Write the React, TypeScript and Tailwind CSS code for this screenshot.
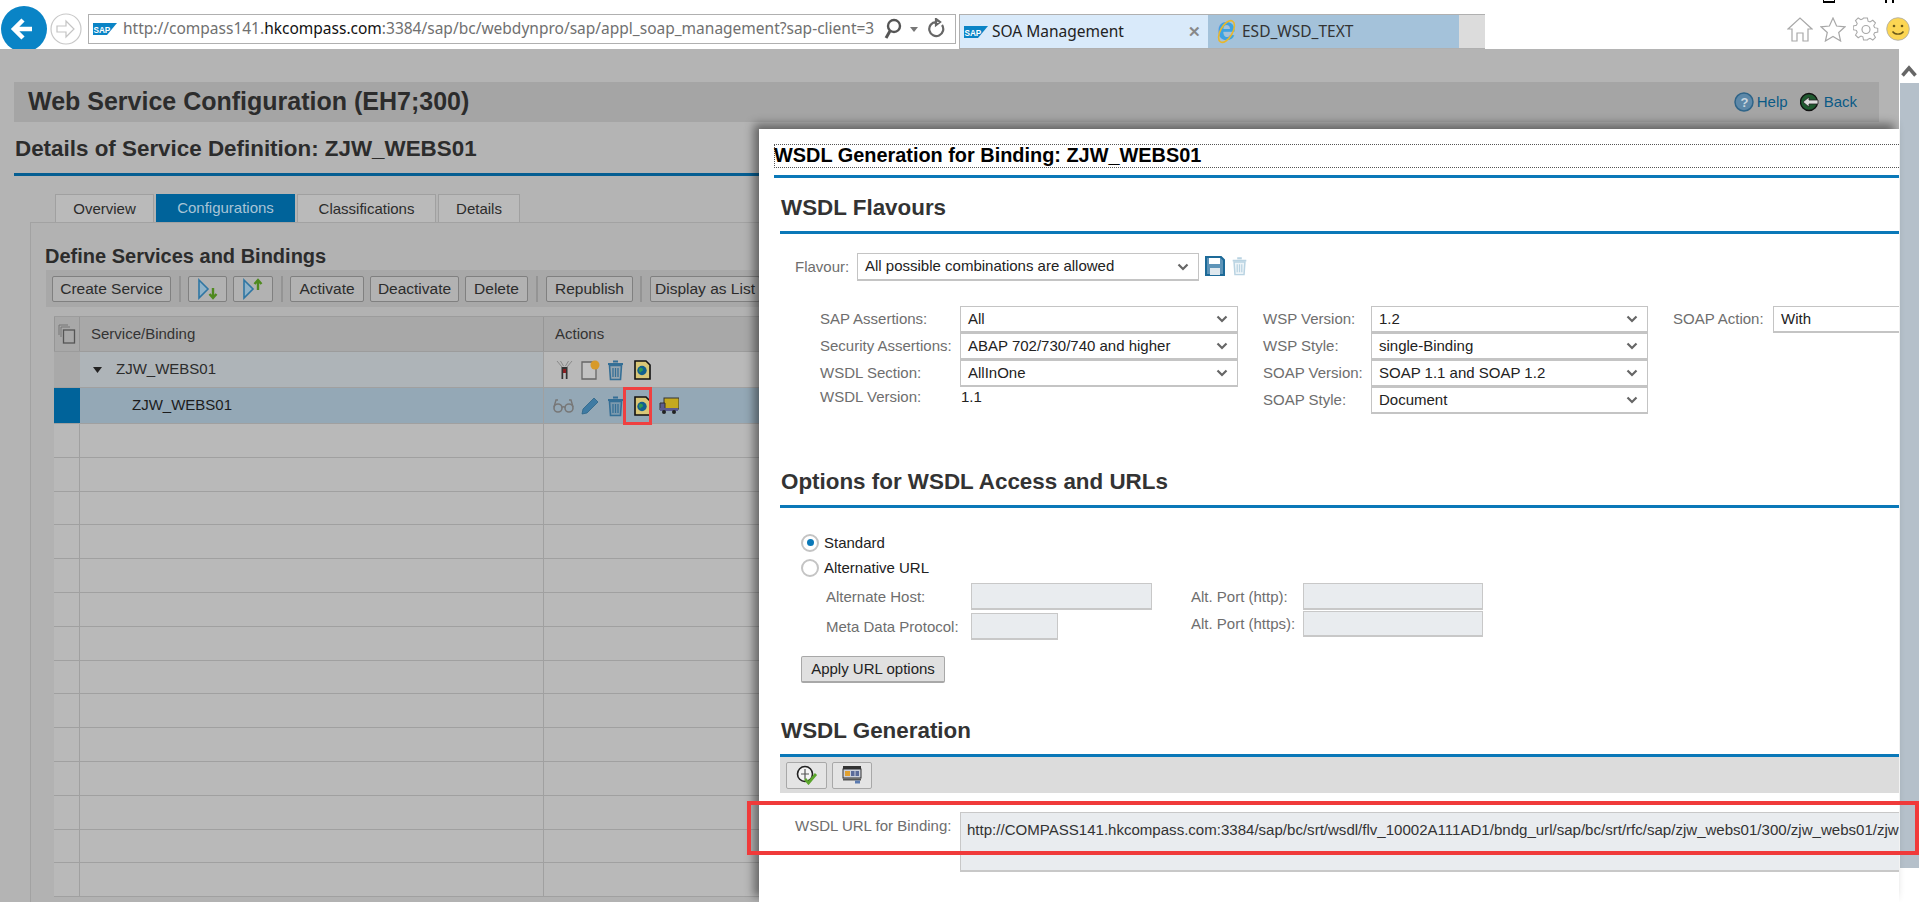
import React from 'react';

const emptyRows = Array.from({ length: 14 }, (_, i) => i);

const SapLogo = () => (
  <svg width="24" height="12" viewBox="0 0 24 12" className="shrink-0">
    <polygon points="0,0 24,0 14,12 0,12" fill="#0a84c6" />
    <text x="0.500" y="9.500" fontSize="8.200" fontWeight="700" fill="#fff" fontFamily="Liberation Sans, sans-serif">SAP</text>
  </svg>
);

const Chevron = () => (
  <svg width="12" height="8" viewBox="0 0 12 8" className="shrink-0">
    <path d="M1.500 1.500 6 6l4.500-4.500" fill="none" stroke="#666" strokeWidth="2.200" />
  </svg>
);

const TrashIcon = ({ color = '#356f96', w = 17, h = 22 }: { color?: string; w?: number; h?: number }) => (
  <svg width={w} height={h} viewBox="0 0 17 22" className="shrink-0">
    <path d="M6 2.500h5M1 5h15" stroke={color} strokeWidth="2" fill="none" />
    <path d="M2.500 6.500 3.500 20.500h10l1-14z" fill={color} fillOpacity="0.25" stroke={color} strokeWidth="1.600" />
    <path d="M6 9v9M8.500 9v9M11 9v9" stroke={color} strokeWidth="1.300" />
  </svg>
);

const GlobeDoc = () => (
  <svg width="17" height="20" viewBox="0 0 17 20" className="shrink-0">
    <path d="M1 1h11l4 4v14H1z" fill="#d9c777" stroke="#111" strokeWidth="1.600" />
    <circle cx="8" cy="10.500" r="4.700" fill="#12608f" />
    <path d="M5.500 8c1.800-.8 3.500 0 3.500 1.800s-2.500 1.200-2.500 3c-1.700-.8-1.900-3.400-1-4.800z" fill="#2f9a52" />
  </svg>
);

const TowerIcon = () => (
  <svg width="17" height="19" viewBox="0 0 17 19" className="shrink-0">
    <path d="M1 1l5 6M16 1l-5 6M4.500 1l3 5M12.500 1l-3 5" stroke="#8a8a8a" strokeWidth="1" fill="none" />
    <rect x="5.500" y="7" width="6" height="12" fill="#333" />
    <rect x="7" y="9" width="3" height="4" fill="#8a1f22" />
    <rect x="7.200" y="13" width="2.600" height="6" fill="#bbb" />
  </svg>
);

const NewDocIcon = () => (
  <svg width="19" height="20" viewBox="0 0 19 20" className="shrink-0">
    <path d="M1 2h14v17H1z" fill="#c2c2c2" stroke="#666" strokeWidth="1.300" />
    <circle cx="14" cy="5" r="4.500" fill="#d79a2a" />
  </svg>
);

const GlassesIcon = () => (
  <svg width="21" height="16" viewBox="0 0 21 16" className="shrink-0">
    <circle cx="5" cy="10" r="4" fill="none" stroke="#777" strokeWidth="1.600" />
    <circle cx="16" cy="10" r="4" fill="none" stroke="#777" strokeWidth="1.600" />
    <path d="M9 9.500c1-1 2-1 3 0M1 9 3 2h2M20 9 18 2h-2" fill="none" stroke="#777" strokeWidth="1.400" />
  </svg>
);

const PencilIcon = () => (
  <svg width="18" height="18" viewBox="0 0 18 18" className="shrink-0">
    <path d="M13 1l4 4L6 16l-5 1 1-5z" fill="#3f7ba3" stroke="#2d6588" strokeWidth="0.800" />
  </svg>
);

const TruckIcon = () => (
  <svg width="20" height="17" viewBox="0 0 20 17" className="shrink-0">
    <rect x="5" y="1" width="15" height="11" fill="#c4a91f" stroke="#333" strokeWidth="1" />
    <path d="M1 6h5v7H1z" fill="#5b5c8f" stroke="#333" strokeWidth="1" />
    <rect x="1" y="11" width="18" height="3" fill="#5b5c8f" />
    <circle cx="5" cy="15" r="2" fill="#222" />
    <circle cx="15" cy="15" r="2" fill="#222" />
  </svg>
);

const Arrow = ({ up }: { up?: boolean }) => (
  <svg width="22" height="22" viewBox="0 0 22 22" className="shrink-0">
    <path d="M2 2l9 9-9 9z" fill="#8fb2c8" stroke="#2f76a3" strokeWidth="1.600" />
    {up ? (
      <path d="M16 12V4M12.500 6 16 2l3.500 4" fill="none" stroke="#4f8a1f" strokeWidth="2.400" />
    ) : (
      <path d="M16 10v8M12.500 16l3.500 4 3.500-4" fill="none" stroke="#4f8a1f" strokeWidth="2.400" />
    )}
  </svg>
);

const ToolButton = ({ children, w }: { children: React.ReactNode; w: string }) => (
  <div className={`${w} h-[26px] flex items-center justify-center shrink-0 border border-[#808080] rounded-[2px] bg-[#b2b2b2] text-[15.5px] text-[#2c2c2c]`}>
    {children}
  </div>
);

const Sep = ({ cls }: { cls: string }) => <div className={`${cls} w-[2px] h-[26px] bg-[#949494] shrink-0`} />;

const Select = ({ value, w }: { value: string; w: string }) => (
  <div className={`${w} h-[27px] flex items-center justify-between shrink-0 border border-[#c4c4c4] border-b-2 bg-white pl-[7px] pr-[9px] text-[15px] text-[#222]`}>
    <span className="whitespace-nowrap">{value}</span>
    <Chevron />
  </div>
);

const FormRow = ({ label, lw, children }: { label: string; lw: string; children: React.ReactNode }) => (
  <div className="flex items-center h-[27px]">
    <span className={`${lw} shrink-0 text-[15px] text-[#6e6e6e] whitespace-nowrap`}>{label}</span>
    {children}
  </div>
);

const Heading = ({ children, mt }: { children: React.ReactNode; mt: string }) => (
  <div className={`${mt} ml-[21px] border-b-[3px] border-[#0a78b8] pl-px pt-px pb-[10px] h-[40px] leading-[26px] text-[22.4px] font-bold text-[#333]`}>
    {children}
  </div>
);

const ReadOnlyBox = ({ w, h = 'h-[27px]' }: { w: string; h?: string }) => (
  <div className={`${w} ${h} shrink-0 bg-[#e9ecef] border border-[#c8c8c8] border-b-2`} />
);

const BrowserBar = () => (
  <header className="h-[49px] flex shrink-0 overflow-hidden bg-white font-['Noto_Sans',sans-serif]">
    <svg width="46" height="46" viewBox="0 0 46 46" className="ml-px mt-[6px] shrink-0">
      <circle cx="23" cy="23" r="23" fill="#0a84c6" />
      <path d="M31 23H14M22 14l-9 9 9 9" fill="none" stroke="#fff" strokeWidth="4.500" />
    </svg>
    <svg width="32" height="32" viewBox="0 0 32 32" className="ml-[3px] mt-[13px] shrink-0">
      <circle cx="16" cy="16" r="15" fill="none" stroke="#c8c8c8" strokeWidth="1.200" />
      <path d="M7 13h9V8l8 8-8 8v-5H7z" fill="none" stroke="#c4c4c4" strokeWidth="1.200" />
    </svg>
    <div className="w-[868px] h-[30px] mt-[14px] ml-[6px] flex items-center shrink-0 border border-[#b0b0b0] pl-[4px]">
      <SapLogo />
      <div className="w-[754px] ml-[6px] overflow-hidden whitespace-nowrap text-[15.5px] text-[#707070]">
        http://compass141.<span className="text-[#111]">hkcompass.com</span>:3384/sap/bc/webdynpro/sap/appl_soap_management?sap-client=3
      </div>
      <svg width="20" height="22" viewBox="0 0 20 22" className="ml-[6px] shrink-0">
        <circle cx="11" cy="8" r="6" fill="none" stroke="#555" strokeWidth="2.400" />
        <path d="M7 13l-4 7" stroke="#555" strokeWidth="3" />
      </svg>
      <svg width="8" height="5" viewBox="0 0 8 5" className="ml-[7px] shrink-0">
        <path d="M0 0h8L4 5z" fill="#777" />
      </svg>
      <svg width="20" height="22" viewBox="0 0 20 22" className="ml-[9px] shrink-0">
        <path d="M15 7a7 7 0 1 1-6-3M9 1v6l4-3z" fill="none" stroke="#666" strokeWidth="2.200" />
      </svg>
    </div>
    <div className="ml-[3px] mt-[14px] h-[35px] flex border-y border-l border-[#b0b0b0] shrink-0 text-[15.5px]">
      <div className="w-[248px] flex items-center bg-[#d9eafa] pl-[4px] pr-[7px] text-[#222]">
        <SapLogo />
        <span className="ml-[4px] flex-1 whitespace-nowrap">SOA Management</span>
        <span className="text-[#888] text-[15px] font-bold">✕</span>
      </div>
      <div className="w-[251px] flex items-center bg-[#a4c2da] pl-[8px] text-[#333]">
        <svg width="21" height="25" viewBox="0 0 21 25" className="shrink-0">
          <text x="1" y="21" fontSize="33" fontWeight="700" fill="#3da2e2" fontFamily="Liberation Sans, sans-serif">e</text>
          <ellipse cx="10.500" cy="12.500" rx="6" ry="12" transform="rotate(30 10.500 12.500)" fill="none" stroke="#e8b72c" strokeWidth="1.600" />
        </svg>
        <span className="ml-[5px] whitespace-nowrap">ESD_WSD_TEXT</span>
      </div>
      <div className="w-[26px] bg-[#dcdcdc]" />
    </div>
    <div className="ml-[302px] mt-[17px] flex items-start gap-[7px] shrink-0">
      <svg width="26" height="25" viewBox="0 0 26 25">
        <path d="M1 12 13 1l12 11h-4v12h-5v-8h-6v8H5V12z" fill="none" stroke="#a8a8a8" strokeWidth="1.200" />
      </svg>
      <svg width="26" height="25" viewBox="0 0 26 25">
        <path d="m13 1 3.600 8 8.400.8-6.300 5.700 1.900 8.500L13 19.500 5.400 24l1.900-8.500L1 9.800 9.400 9z" fill="none" stroke="#a8a8a8" strokeWidth="1.200" />
      </svg>
      <svg width="26" height="25" viewBox="0 0 26 25">
        <circle cx="13" cy="12.500" r="4" fill="none" stroke="#a8a8a8" strokeWidth="1.200" />
        <path d="M11 1h4l.7 3.300 2 .9 2.900-1.800 2.800 2.800-1.800 2.900.9 2 3.300.7v3.800l-3.300.7-.9 2 1.800 2.900-2.800 2.800-2.900-1.800-2 .9L15 24h-4l-.7-3.300-2-.9-2.900 1.800-2.800-2.800 1.800-2.900-.9-2-3.300-.7V9.400l3.300-.7.9-2-1.800-2.900 2.800-2.800 2.900 1.800 2-.9z" fill="none" stroke="#a8a8a8" strokeWidth="1.100" transform="scale(.96)" />
      </svg>
      <svg width="24" height="24" viewBox="0 0 24 24">
        <circle cx="12" cy="12" r="11.300" fill="#fcd653" stroke="#a8a8a8" strokeWidth="0.800" />
        <circle cx="8" cy="9" r="1.300" fill="#6b5a1a" />
        <circle cx="16" cy="9" r="1.300" fill="#6b5a1a" />
        <path d="M6.500 14.500c2.500 3.500 8.500 3.500 11 0" fill="none" stroke="#6b5a1a" strokeWidth="1.400" />
      </svg>
    </div>
  </header>
);

const PageBehind = () => (
  <main className="w-[1899px] shrink-0 bg-[#b4b4b4] pl-[14px] pt-[33px] flex flex-col text-[#2c2c2c] overflow-hidden">
    <div className="w-[1865px] h-[40px] shrink-0 bg-[#a5a5a5] flex items-center justify-between pl-[14px] pr-[22px]">
      <h1 className="text-[25px] font-bold">Web Service Configuration (EH7;300)</h1>
      <div className="flex items-center text-[15px] text-[#0b5a86]">
        <svg width="20" height="20" viewBox="0 0 20 20">
          <circle cx="10" cy="10" r="9" fill="#5d88a8" stroke="#2f6488" strokeWidth="1.500" />
          <text x="6.500" y="15" fontSize="13" fontWeight="700" fill="#c9d6df" fontFamily="Liberation Sans, sans-serif">?</text>
        </svg>
        <span className="ml-[3px]">Help</span>
        <svg width="20" height="20" viewBox="0 0 20 20" className="ml-[12px]">
          <circle cx="9" cy="10" r="8.500" fill="#1f5a30" stroke="#111" strokeWidth="1.300" />
          <path d="M3 10l6-5v3h9v4H9v3z" fill="#ddd" stroke="#222" strokeWidth="0.800" />
        </svg>
        <span className="ml-[4px]">Back</span>
      </div>
    </div>
    <div className="h-[54px] shrink-0 flex items-center text-[22.4px] font-bold border-b-[3px] border-[#055e92] pl-px pt-[3px]">
      Details of Service Definition: ZJW_WEBS01
    </div>
    <div className="mt-[18px] ml-[41px] h-[28px] flex shrink-0 gap-[2px] text-[15px] pt-0">
      <div className="w-[99px] flex items-center justify-center pt-px bg-[#bababa] border border-b-0 border-[#a0a0a0]">Overview</div>
      <div className="w-[139px] flex items-center justify-center pt-px bg-[#00639a] text-[#a8c4d6]">Configurations</div>
      <div className="w-[139px] flex items-center justify-center pt-px bg-[#bababa] border border-b-0 border-[#a0a0a0]">Classifications</div>
      <div className="w-[82px] flex items-center justify-center pt-px bg-[#bababa] border border-b-0 border-[#a0a0a0]">Details</div>
    </div>
    <div className="ml-[16px] flex-1 min-h-0 border-l border-t border-[#a2a2a2] bg-[#b2b2b2] pl-[15px]">
      <h2 className="-ml-px h-[47px] pt-[21px] leading-[24px] text-[20px] font-bold whitespace-nowrap">Define Services and Bindings</h2>
      <div className="h-[37px] flex items-center bg-[#a8a8a8] pl-[6px]">
        <ToolButton w="w-[119px]">Create Service</ToolButton>
        <Sep cls="ml-[8px]" />
        <div className="ml-[7px]"><ToolButton w="w-[39px]"><Arrow /></ToolButton></div>
        <div className="ml-[6px]"><ToolButton w="w-[40px]"><Arrow up /></ToolButton></div>
        <Sep cls="ml-[8px]" />
        <div className="ml-[7px]"><ToolButton w="w-[74px]">Activate</ToolButton></div>
        <div className="ml-[6px]"><ToolButton w="w-[89px]">Deactivate</ToolButton></div>
        <div className="ml-[6px]"><ToolButton w="w-[63px]">Delete</ToolButton></div>
        <Sep cls="ml-[8px]" />
        <div className="ml-[8px]"><ToolButton w="w-[87px]">Republish</ToolButton></div>
        <Sep cls="ml-[7px]" />
        <div className="ml-[8px]"><ToolButton w="w-[110px]">Display as List</ToolButton></div>
      </div>
      <div className="mt-[9px] ml-[8px] text-[15px]">
        <div className="h-[36px] flex bg-[#a8a8a8] border-y border-[#9c9c9c] text-[#333]">
          <div className="w-[26px] flex items-center justify-center border-x border-[#969696]">
            <svg width="18" height="20" viewBox="0 0 18 20">
              <path d="M1 1h9M1 1v10M3 3h9M3 3v10" fill="none" stroke="#777" strokeWidth="1" />
              <rect x="5.500" y="6" width="11" height="13" fill="none" stroke="#555" strokeWidth="1.300" />
            </svg>
          </div>
          <div className="w-[464px] flex items-center pl-[11px] border-r border-[#969696]">Service/Binding</div>
          <div className="flex-1 flex items-center pl-[11px]">Actions</div>
        </div>
        <div className="h-[36px] flex border-b border-[#a0a0a0]">
          <div className="w-[26px] bg-[#a9a9a9]" />
          <div className="w-[464px] flex items-center bg-[#aeb4b8] pl-[13px] border-r border-[#a0a0a0]">
            <svg width="9" height="6" viewBox="0 0 9 6" className="mr-[14px]"><path d="M0 0h9L4.500 6z" fill="#222" /></svg>
            ZJW_WEBS01
          </div>
          <div className="flex-1 flex items-center bg-[#b9b9b9] pl-[12px]">
            <TowerIcon />
            <span className="ml-[8px]"><NewDocIcon /></span>
            <span className="ml-[7px]"><TrashIcon /></span>
            <span className="ml-[10px]"><GlobeDoc /></span>
          </div>
        </div>
        <div className="h-[36px] flex border-b border-[#a0a0a0]">
          <div className="w-[26px] bg-[#00639a]" />
          <div className="w-[464px] flex items-center bg-[#94a8b6] pl-[52px] border-r border-[#a0a0a0] text-[#1c1c1c]">ZJW_WEBS01</div>
          <div className="flex-1 flex items-center bg-[#94a8b6] pl-[9px]">
            <GlassesIcon />
            <span className="ml-[7px]"><PencilIcon /></span>
            <span className="ml-[8px]"><TrashIcon /></span>
            <span className="ml-[10px]"><GlobeDoc /></span>
            <span className="ml-[8px]"><TruckIcon /></span>
          </div>
        </div>
        {emptyRows.map(i => (
          <div key={i} className="h-[33.8px] flex border-b border-[#a0a0a0] bg-[#b9b9b9]">
            <div className="w-[26px] border-r border-[#a0a0a0]" />
            <div className="w-[464px] border-r border-[#a0a0a0]" />
          </div>
        ))}
      </div>
    </div>
  </main>
);

const Radio = ({ on }: { on?: boolean }) => (
  <span className="w-[18px] h-[18px] rounded-full border-2 border-[#c4c4c4] bg-white flex items-center justify-center shrink-0">
    {on && <span className="w-[7px] h-[7px] rounded-full bg-[#0a78b8]" />}
  </span>
);

const Dialog = () => (
  <section className="absolute left-[759px] top-[129px] bottom-0 w-[1140px] bg-white overflow-hidden shadow-[-5px_-5px_9px_rgba(0,0,0,0.45)]">
    <div className="mt-[15px] ml-[15px] h-[24px] flex items-center border border-r-0 border-dotted border-[#555] text-[19.9px] font-bold text-black whitespace-nowrap">
      <span className="-ml-px">WSDL Generation for Binding: ZJW_WEBS01</span>
    </div>
    <div className="mt-[7px] ml-[15px] h-[3px] bg-[#0a78b8]" />

    <Heading mt="mt-[16px]">WSDL Flavours</Heading>
    <div className="mt-[19px] ml-[36px] flex items-center h-[28px]">
      <span className="w-[62px] shrink-0 text-[15px] text-[#6e6e6e]">Flavour:</span>
      <Select value="All possible combinations are allowed" w="w-[342px] !h-[28px]" />
      <svg width="20" height="20" viewBox="0 0 20 20" className="ml-[6px] mb-[2px] shrink-0">
        <path d="M1 1h15l3 3v15H1z" fill="#5e94b8" stroke="#1d6a98" strokeWidth="2" />
        <rect x="4" y="2" width="11" height="6" fill="#fff" />
        <rect x="5" y="12" width="10" height="7" fill="#dfe8ee" />
      </svg>
      <span className="ml-[6px] mb-[2px]"><TrashIcon color="#b9d3e2" w={17} h={20} /></span>
    </div>

    <div className="mt-[25px] ml-[61px] flex items-start">
      <div className="flex flex-col shrink-0">
        <FormRow label="SAP Assertions:" lw="w-[140px]"><Select value="All" w="w-[278px]" /></FormRow>
        <FormRow label="Security Assertions:" lw="w-[140px]"><Select value="ABAP 702/730/740 and higher" w="w-[278px]" /></FormRow>
        <FormRow label="WSDL Section:" lw="w-[140px]"><Select value="AllInOne" w="w-[278px]" /></FormRow>
        <div className="-mt-[3px]">
          <FormRow label="WSDL Version:" lw="w-[141px]"><span className="text-[15px] text-[#222]">1.1</span></FormRow>
        </div>
      </div>
      <div className="flex flex-col ml-[25px] shrink-0">
        <FormRow label="WSP Version:" lw="w-[108px]"><Select value="1.2" w="w-[277px]" /></FormRow>
        <FormRow label="WSP Style:" lw="w-[108px]"><Select value="single-Binding" w="w-[277px]" /></FormRow>
        <FormRow label="SOAP Version:" lw="w-[108px]"><Select value="SOAP 1.1 and SOAP 1.2" w="w-[277px]" /></FormRow>
        <FormRow label="SOAP Style:" lw="w-[108px]"><Select value="Document" w="w-[277px]" /></FormRow>
      </div>
      <div className="ml-[25px] shrink-0">
        <FormRow label="SOAP Action:" lw="w-[100px]"><Select value="With" w="w-[277px]" /></FormRow>
      </div>
    </div>

    <Heading mt="mt-[54px]">Options for WSDL Access and URLs</Heading>
    <div className="mt-[22px] ml-[42px] text-[15px] text-[#222]">
      <div className="h-[25px] flex items-center gap-[5px]"><Radio on /><span className="pt-px">Standard</span></div>
      <div className="h-[25px] flex items-center gap-[5px]"><Radio /><span className="pt-px">Alternative URL</span></div>
    </div>
    <div className="mt-[3px] ml-[67px] flex items-start text-[15px] text-[#6e6e6e]">
      <div className="flex flex-col gap-[3px] shrink-0">
        <div className="flex items-center"><span className="w-[145px] shrink-0 pt-px">Alternate Host:</span><ReadOnlyBox w="w-[181px]" /></div>
        <div className="flex items-center"><span className="w-[145px] shrink-0 pt-px">Meta Data Protocol:</span><ReadOnlyBox w="w-[87px]" /></div>
      </div>
      <div className="flex flex-col gap-px ml-[39px] shrink-0">
        <div className="flex items-center"><span className="w-[112px] shrink-0 pt-px">Alt. Port (http):</span><ReadOnlyBox w="w-[180px]" /></div>
        <div className="flex items-center"><span className="w-[112px] shrink-0 pt-px">Alt. Port (https):</span><ReadOnlyBox w="w-[180px]" h="h-[26px]" /></div>
      </div>
    </div>
    <div className="mt-[16px] ml-[42px] w-[144px] h-[27px] flex items-center justify-center bg-[#e0e0e0] border border-[#a8a8a8] border-b-2 rounded-[2px] text-[15px] text-[#222]">Apply URL options</div>

    <Heading mt="mt-[34px]">WSDL Generation</Heading>
    <div className="ml-[21px] h-[36px] bg-[#dcdcdc] flex items-center pl-[6px] gap-[5px]">
      <div className="w-[41px] h-[27px] flex items-center justify-center bg-[#e4e4e4] border border-[#a8a8a8] rounded-[2px]">
        <svg width="22" height="20" viewBox="0 0 22 20">
          <circle cx="9" cy="9" r="7.500" fill="#f4f4f4" stroke="#222" strokeWidth="1.600" />
          <path d="M9 4v10M5 9h8" fill="none" stroke="#555" strokeWidth="1.200" />
          <path d="M9 14l3.500 4L20 9" fill="none" stroke="#5aa52c" strokeWidth="2.800" />
        </svg>
      </div>
      <div className="w-[40px] h-[27px] flex items-center justify-center bg-[#e4e4e4] border border-[#a8a8a8] rounded-[2px]">
        <svg width="20" height="20" viewBox="0 0 20 20">
          <rect x="1" y="1" width="18" height="3" fill="#333" />
          <rect x="1" y="4" width="18" height="9" fill="#ccd0dc" stroke="#333" strokeWidth="1" />
          <rect x="3" y="6" width="5" height="5" fill="#e0a030" />
          <rect x="9" y="6" width="3.500" height="5" fill="#5a6a9a" />
          <rect x="13.500" y="6" width="3.500" height="5" fill="#5a6a9a" />
          <path d="M1 14.500h18" stroke="#555" strokeWidth="2" />
          <path d="M13 17h5" stroke="#5a7ab0" strokeWidth="3" />
        </svg>
      </div>
    </div>
    <div className="mt-[19px] ml-[36px] flex items-start">
      <span className="w-[165px] shrink-0 h-[28px] pt-px flex items-center text-[15px] text-[#6e6e6e]">WSDL URL for Binding:</span>
      <div className="flex-1 min-w-0 h-[60px] bg-[#e9ecef] border border-r-0 border-[#c8c8c8] border-b-2 pl-[6px] pt-[6px] text-[15.05px] text-[#333] whitespace-nowrap overflow-hidden">
        http://COMPASS141.hkcompass.com:3384/sap/bc/srt/wsdl/flv_10002A111AD1/bndg_url/sap/bc/srt/rfc/sap/zjw_webs01/300/zjw_webs01/zjw
      </div>
    </div>
  </section>
);

const App: React.FC = () => {
  return (
    <div className="relative w-[1919px] h-[902px] overflow-hidden bg-white flex flex-col font-['Liberation_Sans',Arial,sans-serif]">
      <BrowserBar />
      <div className="flex-1 min-h-0 flex">
        <PageBehind />
        <aside className="w-[20px] shrink-0 flex flex-col items-end bg-white">
          <svg width="16" height="14" viewBox="0 0 16 14" className="mt-[15px] mr-[2px] shrink-0">
            <path d="M1.500 11.500 8 4l6.500 7.500" fill="none" stroke="#666" strokeWidth="3.500" />
          </svg>
          <div className="mt-[5px] w-[19px] h-[785px] bg-[#b5c0ca]" />
        </aside>
      </div>
      <Dialog />
      <div className="absolute left-[623px] top-[387px] w-[29px] h-[38px] border-[3px] border-[#f04040]" />
      <div className="absolute left-[747px] top-[801px] w-[1172px] h-[54px] border-[4px] border-[#f03a3a]" />
      <div className="absolute left-[1823px] top-0 w-[12px] h-[3px] border-b-2 border-x border-black" />
      <div className="absolute left-[1885px] top-0 w-[9px] h-[3px] border-x-2 border-black" />
    </div>
  );
};

export default App;
